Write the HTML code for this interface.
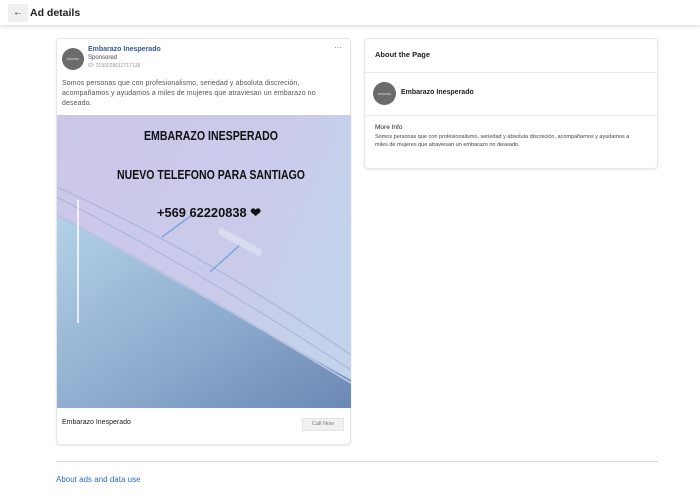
<!DOCTYPE html>
<html><head><meta charset="utf-8"><style>
*{margin:0;padding:0;box-sizing:border-box}
body{width:700px;height:498px;background:#fff;font-family:"Liberation Sans",sans-serif;position:relative;overflow:hidden;color:#1c1e21}
.top{position:absolute;left:0;top:0;width:700px;height:25px;background:#fff;box-shadow:0 2px 3px rgba(0,0,0,.12)}
.back{position:absolute;left:8px;top:4px;width:20px;height:18px;background:#f0f0f0;font-size:10px;text-align:center;line-height:18px}
.title{position:absolute;left:30px;top:7px;font-size:10.5px;font-weight:bold}
.card{position:absolute;background:#fff;border:1px solid #e4e6eb;border-radius:4px;box-shadow:0 1px 2px rgba(0,0,0,.08)}
.av{position:absolute;border-radius:50%;background:#6b6b6b}
.av:after{content:"";position:absolute;left:22%;right:22%;top:46%;height:2px;background:#999}
.tx{position:absolute;font-size:6px;color:#555;line-height:9px}
</style></head><body>
<div class="top"><div class="back">←</div><div class="title">Ad details</div></div>

<div class="card" style="left:56px;top:38px;width:295px;height:407px">
 <div class="av" style="left:5px;top:9px;width:22px;height:22px"></div>
 <div style="position:absolute;left:31px;top:7px;font-size:7px;color:#385898;font-weight:bold">Embarazo Inesperado</div>
 <div style="position:absolute;left:31px;top:16px;font-size:6px;color:#444">Sponsored</div>
 <div style="position:absolute;left:31px;top:24px;font-size:5px;color:#999">ID: 3190028612717138</div>
 <div style="position:absolute;right:8px;top:4px;font-size:8px;color:#666">···</div>
 <div class="tx" style="left:5px;top:40px;width:285px;font-size:7px;line-height:10px;letter-spacing:.1px">Somos personas que con profesionalismo, seriedad y absoluta discreción, acompañamos y ayudamos a miles de mujeres que atraviesan un embarazo no deseado.</div>
 <svg style="position:absolute;left:0;top:76px" width="294" height="293" viewBox="0 0 294 293">
  <defs>
   <linearGradient id="b" x1="0" y1="0" x2="1" y2="1"><stop offset="0" stop-color="#b3d2e8"/><stop offset=".6" stop-color="#8aa8cc"/><stop offset="1" stop-color="#6a88b2"/></linearGradient>
   <linearGradient id="t" x1="0" y1="0" x2="1" y2="0.4"><stop offset="0" stop-color="#ccc7e9"/><stop offset=".7" stop-color="#cacbea"/><stop offset="1" stop-color="#c3d3ec"/></linearGradient>
  </defs>
  <rect width="294" height="293" fill="url(#t)"/>
  <polygon points="0,100 294,265 294,293 0,293" fill="url(#b)"/>
  <path d="M0,72 Q150,140 294,240" stroke="#b0badb" stroke-width="1.5" fill="none"/>
  <path d="M0,82 Q150,160 294,255" stroke="#aab5d8" stroke-width="1" fill="none"/>
  <path d="M0,100 Q150,180 294,268" stroke="#b8c2e0" stroke-width="2" fill="none"/>
  <line x1="105" y1="122" x2="135" y2="100" stroke="#7aa6dc" stroke-width="1.5"/>
  <line x1="153" y1="157" x2="183" y2="130" stroke="#7aa6dc" stroke-width="1.5"/>
  <polygon points="163,112 205,135 203,142 161,119" fill="#d8dcf0"/>
  <line x1="21" y1="85" x2="21" y2="208" stroke="#fff" stroke-width="1.5"/>
  <g font-family="Liberation Sans Narrow, Liberation Sans, sans-serif" font-weight="bold" fill="#111" text-anchor="middle" font-size="13">
   <text x="154" y="25" textLength="134" lengthAdjust="spacingAndGlyphs">EMBARAZO INESPERADO</text>
   <text x="154" y="64" textLength="188" lengthAdjust="spacingAndGlyphs">NUEVO TELEFONO PARA SANTIAGO</text>
   <text x="152" y="102" textLength="104" lengthAdjust="spacingAndGlyphs">+569 62220838 ❤</text>
  </g>
 </svg>
 <div style="position:absolute;left:5px;top:380px;font-size:7px;color:#222">Embarazo Inesperado</div>
 <div style="position:absolute;left:245px;top:379px;width:42px;height:13px;background:#f0f1f3;border:1px solid #e4e4e4;font-size:5.5px;color:#777;text-align:center;line-height:11px">Call Now</div>
</div>

<div class="card" style="left:364px;top:38px;width:294px;height:131px">
 <div style="position:absolute;left:10px;top:11px;font-size:7.5px;font-weight:bold">About the Page</div>
 <div style="position:absolute;left:0;right:0;top:33px;border-top:1px solid #e8e8e8"></div>
 <div class="av" style="left:8px;top:43px;width:23px;height:23px"></div>
 <div style="position:absolute;left:36px;top:50px;font-size:7px;font-weight:bold">Embarazo Inesperado</div>
 <div style="position:absolute;left:0;right:0;top:76px;border-top:1px solid #e8e8e8"></div>
 <div style="position:absolute;left:10px;top:85px;font-size:6.5px">More Info</div>
 <div class="tx" style="left:10px;top:94px;width:265px;font-size:5.5px;line-height:8px;color:#444">Somos personas que con profesionalismo, seriedad y absoluta discreción, acompañamos y ayudamos a miles de mujeres que atraviesan un embarazo no deseado.</div>
</div>

<div style="position:absolute;left:56px;top:461px;width:602px;border-top:1px solid #dcdde0"></div>
<div style="position:absolute;left:56px;top:475px;font-size:8px;color:#2d6bd4">About ads and data use</div>
</body></html>
